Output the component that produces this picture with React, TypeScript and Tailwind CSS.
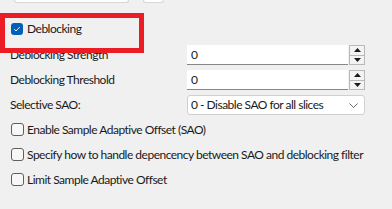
import React from "react";

const font = { fontFamily: 'Lato, "Liberation Sans", Arial, sans-serif' };

function Check({ checked }: { checked?: boolean }) {
  if (checked) {
    return (
      <span className="flex h-[12px] w-[12px] items-center justify-center rounded-[3px] bg-[#005fb8]">
        <svg width="8" height="8" viewBox="0 0 8 8">
          <path d="M1.2 4.2 L3 6 L6.8 2" fill="none" stroke="#fff" strokeWidth="0.9" />
        </svg>
      </span>
    );
  }
  return <span className="block h-[13px] w-[13px] shrink-0 rounded-[3px] border border-[#5e5e5e] bg-[#f7f7f7]" />;
}

function Spin({ value }: { value: string }) {
  return (
    <div className="flex h-[20px] w-[178px]">
      <div className="flex flex-1 items-center border-b border-[#868686] bg-white pl-[4px] text-[12px] text-[#1a1a1a]">
        {value}
      </div>
      <div className="ml-[1px] flex w-[16px] flex-col border border-[#b9b9b9] bg-[#f3f3f3]">
        <div className="flex flex-1 items-center justify-center border-b border-[#b9b9b9]">
          <svg width="7" height="4" viewBox="0 0 7 4">
            <path d="M0 4 L3.5 0 L7 4 Z" fill="#1a1a1a" />
          </svg>
        </div>
        <div className="flex flex-1 items-center justify-center">
          <svg width="7" height="4" viewBox="0 0 7 4">
            <path d="M0 0 L3.5 4 L7 0 Z" fill="#1a1a1a" />
          </svg>
        </div>
      </div>
    </div>
  );
}

export default function App() {
  return (
    <div className="relative h-[209px] w-[392px] overflow-hidden whitespace-nowrap bg-[#f0f0f0] text-[12px] tracking-[-0.5px] text-[#1a1a1a]" style={font}>
      {/* tabs peeking from above */}
      <div className="flex h-[3px]">
        <div className="ml-[14px] w-[115px] rounded-b-[3px] border border-t-0 border-[#d6d6d6] bg-white" />
        <div className="ml-[14px] w-[21px] rounded-b-[3px] border border-t-0 border-[#d6d6d6] bg-white" />
      </div>

      <div className="mt-[20px] flex items-center gap-[4px] pl-[11px] leading-[12px]">
        <Check checked />
        <span>Deblocking</span>
      </div>

      <div className="mt-[10px] grid grid-cols-[177px_178px] gap-y-[5px] pl-[10px]">
        <div className="flex items-center">Deblocking Strength</div>
        <Spin value="0" />
        <div className="flex items-center">Deblocking Threshold</div>
        <Spin value="0" />
        <div className="flex items-center">Selective SAO:</div>
        <div className="flex h-[20px] items-center justify-between rounded-[3px] border border-[#d0d0d0] bg-white pl-[3px] pr-[6px]">
          <span>0 - Disable SAO for all slices</span>
          <svg width="9" height="5" viewBox="0 0 9 5">
            <path d="M0.5 0.5 L4.5 4.5 L8.5 0.5" fill="none" stroke="#555" strokeWidth="0.9" />
          </svg>
        </div>
      </div>

      <div className="mt-[8px] flex flex-col gap-[12px] pl-[11px]">
        <div className="flex items-center gap-[3px] leading-[13px]">
          <Check />
          <span>Enable Sample Adaptive Offset (SAO)</span>
        </div>
        <div className="flex items-center gap-[3px] leading-[13px]">
          <Check />
          <span>Specify how to handle depencency between SAO and deblocking filter</span>
        </div>
        <div className="flex items-center gap-[3px] leading-[13px]">
          <Check />
          <span>Limit Sample Adaptive Offset</span>
        </div>
      </div>

      {/* red annotation box */}
      <div className="absolute left-0 top-[13px] h-[40px] w-[144px] border-[5px] border-[#ec1c24]" />
    </div>
  );
}
